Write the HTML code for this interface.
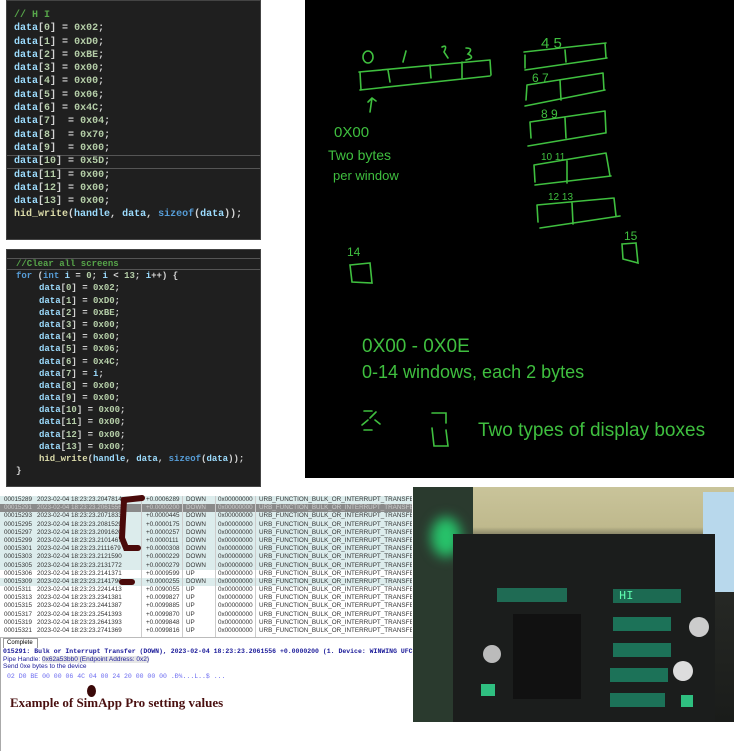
<!DOCTYPE html>
<html><head><meta charset="utf-8"><style>
body{margin:0;width:734px;height:750px;background:#fff;position:relative;overflow:hidden;font-family:"Liberation Sans",sans-serif}
.code{position:absolute;background:#1f1f1f;border:1px solid #444;font-family:"Liberation Mono",monospace;font-weight:bold;font-size:10px;color:#9cdcfe}
.code div{height:13.3px;line-height:13.3px;white-space:pre}
.code.c2 div{height:12.2px;line-height:12.2px}
.n{color:#b5cea8}.c{color:#57a64a}.k{color:#569cd6}.f{color:#dcdcaa}.p{color:#d4d4d4}
.tbl{position:absolute;left:0;top:0;width:412px;font-size:6.3px;color:#333;font-family:"Liberation Sans",sans-serif}
.tbl div{height:8.2px;line-height:8.2px;white-space:nowrap;position:relative}
.tbl span{position:absolute}
.d{background:#dcecec}.s{background:#8a8a8a;color:#ccc}
</style></head><body>
<div class="code" style="left:6px;top:0;width:253px;height:230px;padding-top:8px">
<div style="padding-left:7px"><span class="c">// H I</span></div>
<div style="padding-left:7px">data<span class="p">[</span><span class="n">0</span><span class="p">] = </span><span class="n">0x02</span><span class="p">;</span></div>
<div style="padding-left:7px">data<span class="p">[</span><span class="n">1</span><span class="p">] = </span><span class="n">0xD0</span><span class="p">;</span></div>
<div style="padding-left:7px">data<span class="p">[</span><span class="n">2</span><span class="p">] = </span><span class="n">0xBE</span><span class="p">;</span></div>
<div style="padding-left:7px">data<span class="p">[</span><span class="n">3</span><span class="p">] = </span><span class="n">0x00</span><span class="p">;</span></div>
<div style="padding-left:7px">data<span class="p">[</span><span class="n">4</span><span class="p">] = </span><span class="n">0x00</span><span class="p">;</span></div>
<div style="padding-left:7px">data<span class="p">[</span><span class="n">5</span><span class="p">] = </span><span class="n">0x06</span><span class="p">;</span></div>
<div style="padding-left:7px">data<span class="p">[</span><span class="n">6</span><span class="p">] = </span><span class="n">0x4C</span><span class="p">;</span></div>
<div style="padding-left:7px">data<span class="p">[</span><span class="n">7</span><span class="p">]  = </span><span class="n">0x04</span><span class="p">;</span></div>
<div style="padding-left:7px">data<span class="p">[</span><span class="n">8</span><span class="p">]  = </span><span class="n">0x70</span><span class="p">;</span></div>
<div style="padding-left:7px">data<span class="p">[</span><span class="n">9</span><span class="p">]  = </span><span class="n">0x00</span><span class="p">;</span></div>
<div style="padding-left:7px;border-top:1px solid #555;border-bottom:1px solid #555;height:11.3px;line-height:11.3px">data<span class="p">[</span><span class="n">10</span><span class="p">] = </span><span class="n">0x5D</span><span class="p">;</span></div>
<div style="padding-left:7px">data<span class="p">[</span><span class="n">11</span><span class="p">] = </span><span class="n">0x00</span><span class="p">;</span></div>
<div style="padding-left:7px">data<span class="p">[</span><span class="n">12</span><span class="p">] = </span><span class="n">0x00</span><span class="p">;</span></div>
<div style="padding-left:7px">data<span class="p">[</span><span class="n">13</span><span class="p">] = </span><span class="n">0x00</span><span class="p">;</span></div>
<div style="padding-left:7px"><span class="f">hid_write</span><span class="p">(</span>handle<span class="p">, </span>data<span class="p">, </span><span class="k">sizeof</span><span class="p">(</span>data<span class="p">));</span></div>
</div>
<div class="code c2" style="left:6px;top:249px;width:253px;height:228px;padding-top:8px;font-size:9px">
<div style="padding-left:9px;border-top:1px solid #555;border-bottom:1px solid #555;height:10.2px;line-height:10.2px"><span class="c">//Clear all screens</span></div>
<div style="padding-left:9px"><span class="k">for</span><span class="p"> (</span><span class="k">int</span> i<span class="p"> = </span><span class="n">0</span><span class="p">; </span>i<span class="p"> &lt; </span><span class="n">13</span><span class="p">; </span>i<span class="p">++) {</span></div>
<div style="padding-left:32px">data<span class="p">[</span><span class="n">0</span><span class="p">] = </span><span class="n">0x02</span><span class="p">;</span></div>
<div style="padding-left:32px">data<span class="p">[</span><span class="n">1</span><span class="p">] = </span><span class="n">0xD0</span><span class="p">;</span></div>
<div style="padding-left:32px">data<span class="p">[</span><span class="n">2</span><span class="p">] = </span><span class="n">0xBE</span><span class="p">;</span></div>
<div style="padding-left:32px">data<span class="p">[</span><span class="n">3</span><span class="p">] = </span><span class="n">0x00</span><span class="p">;</span></div>
<div style="padding-left:32px">data<span class="p">[</span><span class="n">4</span><span class="p">] = </span><span class="n">0x00</span><span class="p">;</span></div>
<div style="padding-left:32px">data<span class="p">[</span><span class="n">5</span><span class="p">] = </span><span class="n">0x06</span><span class="p">;</span></div>
<div style="padding-left:32px">data<span class="p">[</span><span class="n">6</span><span class="p">] = </span><span class="n">0x4C</span><span class="p">;</span></div>
<div style="padding-left:32px">data<span class="p">[</span><span class="n">7</span><span class="p">] = </span>i<span class="p">;</span></div>
<div style="padding-left:32px">data<span class="p">[</span><span class="n">8</span><span class="p">] = </span><span class="n">0x00</span><span class="p">;</span></div>
<div style="padding-left:32px">data<span class="p">[</span><span class="n">9</span><span class="p">] = </span><span class="n">0x00</span><span class="p">;</span></div>
<div style="padding-left:32px">data<span class="p">[</span><span class="n">10</span><span class="p">] = </span><span class="n">0x00</span><span class="p">;</span></div>
<div style="padding-left:32px">data<span class="p">[</span><span class="n">11</span><span class="p">] = </span><span class="n">0x00</span><span class="p">;</span></div>
<div style="padding-left:32px">data<span class="p">[</span><span class="n">12</span><span class="p">] = </span><span class="n">0x00</span><span class="p">;</span></div>
<div style="padding-left:32px">data<span class="p">[</span><span class="n">13</span><span class="p">] = </span><span class="n">0x00</span><span class="p">;</span></div>
<div style="padding-left:32px"><span class="f">hid_write</span><span class="p">(</span>handle<span class="p">, </span>data<span class="p">, </span><span class="k">sizeof</span><span class="p">(</span>data<span class="p">));</span></div>
<div style="padding-left:9px"><span class="p">}</span></div>
</div>

<svg style="position:absolute;left:305px;top:0" width="429" height="478" viewBox="305 0 429 478">
<rect x="305" y="0" width="429" height="478" fill="#000"/>
<g fill="none" stroke="#3fbf3f" stroke-width="1.6" stroke-linecap="round">
<path d="M359 72 L490 60 M360 90 L490 76 M360 72 L361 90 M388 70 L390 82 M430 65 L431 78 M462 62 L462 78 M490 60 L491 75"/>
<ellipse cx="368" cy="57" rx="5" ry="6"/>
<path d="M403 62 L406 51 M442 47 Q448 44 444 52 L448 58 M466 48 Q474 48 468 54 Q476 58 466 60"/>
<path d="M370 112 L372 98 M368 102 L372 98 L376 101"/>
<path d="M524 52 L606 43 M525 70 L607 58 M525 55 L525 68 M565 50 L566 62 M605 43 L606 58"/>
<path d="M527 85 L603 73 M525 106 L605 90 M527 85 L526 100 M560 80 L561 100 M603 73 L604 90"/>
<path d="M530 122 L605 111 M528 146 L605 133 M530 122 L531 138 M565 118 L566 138 M605 111 L606 133"/>
<path d="M534 165 L606 153 M535 185 L611 176 M534 165 L535 182 M567 161 L567 183 M606 153 L610 176"/>
<path d="M537 205 L614 198 M540 228 L620 216 M537 205 L538 222 M572 203 L573 224 M614 198 L616 216"/>
<path d="M350 265 L370 263 L372 283 L352 282 Z"/>
<path d="M622 244 L636 243 L638 263 L623 259 Z"/>
<path d="M364 411 L372 411 M364 430 L372 430 M376 412 L370 418 M362 425 L368 420 M380 424 L375 420"/>
<path d="M432 413 L446 413 L446 423 M432 428 L434 446 L448 446 L446 430"/>
</g>
<g fill="#3fbf3f" font-family="Liberation Sans,sans-serif">
<text x="334" y="137" font-size="15">0X00</text>
<text x="328" y="160" font-size="14">Two bytes</text>
<text x="333" y="180" font-size="13">per window</text>
<text x="541" y="48" font-size="15">4  5</text>
<text x="532" y="82" font-size="12">6   7</text>
<text x="541" y="118" font-size="12">8   9</text>
<text x="541" y="160" font-size="10">10    11</text>
<text x="548" y="200" font-size="10">12    13</text>
<text x="347" y="256" font-size="12">14</text>
<text x="624" y="240" font-size="12">15</text>
<text x="362" y="352" font-size="19">0X00 - 0X0E</text>
<text x="362" y="378" font-size="18">0-14 windows, each 2 bytes</text>
<text x="478" y="436" font-size="19">Two types of display boxes</text>
</g>
</svg>

<div style="position:absolute;left:0;top:496px;width:412px;height:142px;background:#fff;overflow:hidden">
<div class="tbl">
<div class="d"><span style="left:4px">00015289</span><span style="left:37px">2023-02-04 18:23:23.2047814</span><span style="left:146px">+0.0006289</span><span style="left:186px">DOWN</span><span style="left:218px">0x00000000</span><span style="left:259px">URB_FUNCTION_BULK_OR_INTERRUPT_TRANSFER</span></div>
<div class="s"><span style="left:4px">00015291</span><span style="left:37px">2023-02-04 18:23:23.2061556</span><span style="left:146px">+0.0000200</span><span style="left:186px">DOWN</span><span style="left:218px">0x00000000</span><span style="left:259px">URB_FUNCTION_BULK_OR_INTERRUPT_TRANSFER</span></div>
<div class="d"><span style="left:4px">00015293</span><span style="left:37px">2023-02-04 18:23:23.2071833</span><span style="left:146px">+0.0000445</span><span style="left:186px">DOWN</span><span style="left:218px">0x00000000</span><span style="left:259px">URB_FUNCTION_BULK_OR_INTERRUPT_TRANSFER</span></div>
<div class="d"><span style="left:4px">00015295</span><span style="left:37px">2023-02-04 18:23:23.2081529</span><span style="left:146px">+0.0000175</span><span style="left:186px">DOWN</span><span style="left:218px">0x00000000</span><span style="left:259px">URB_FUNCTION_BULK_OR_INTERRUPT_TRANSFER</span></div>
<div class="d"><span style="left:4px">00015297</span><span style="left:37px">2023-02-04 18:23:23.2091620</span><span style="left:146px">+0.0000257</span><span style="left:186px">DOWN</span><span style="left:218px">0x00000000</span><span style="left:259px">URB_FUNCTION_BULK_OR_INTERRUPT_TRANSFER</span></div>
<div class="d"><span style="left:4px">00015299</span><span style="left:37px">2023-02-04 18:23:23.2101467</span><span style="left:146px">+0.0000111</span><span style="left:186px">DOWN</span><span style="left:218px">0x00000000</span><span style="left:259px">URB_FUNCTION_BULK_OR_INTERRUPT_TRANSFER</span></div>
<div class="d"><span style="left:4px">00015301</span><span style="left:37px">2023-02-04 18:23:23.2111679</span><span style="left:146px">+0.0000308</span><span style="left:186px">DOWN</span><span style="left:218px">0x00000000</span><span style="left:259px">URB_FUNCTION_BULK_OR_INTERRUPT_TRANSFER</span></div>
<div class="d"><span style="left:4px">00015303</span><span style="left:37px">2023-02-04 18:23:23.2121590</span><span style="left:146px">+0.0000229</span><span style="left:186px">DOWN</span><span style="left:218px">0x00000000</span><span style="left:259px">URB_FUNCTION_BULK_OR_INTERRUPT_TRANSFER</span></div>
<div class="d"><span style="left:4px">00015305</span><span style="left:37px">2023-02-04 18:23:23.2131772</span><span style="left:146px">+0.0000279</span><span style="left:186px">DOWN</span><span style="left:218px">0x00000000</span><span style="left:259px">URB_FUNCTION_BULK_OR_INTERRUPT_TRANSFER</span></div>
<div><span style="left:4px">00015306</span><span style="left:37px">2023-02-04 18:23:23.2141371</span><span style="left:146px">+0.0009599</span><span style="left:186px">UP</span><span style="left:218px">0x00000000</span><span style="left:259px">URB_FUNCTION_BULK_OR_INTERRUPT_TRANSFER</span></div>
<div class="d"><span style="left:4px">00015309</span><span style="left:37px">2023-02-04 18:23:23.2141790</span><span style="left:146px">+0.0000255</span><span style="left:186px">DOWN</span><span style="left:218px">0x00000000</span><span style="left:259px">URB_FUNCTION_BULK_OR_INTERRUPT_TRANSFER</span></div>
<div><span style="left:4px">00015311</span><span style="left:37px">2023-02-04 18:23:23.2241413</span><span style="left:146px">+0.0090055</span><span style="left:186px">UP</span><span style="left:218px">0x00000000</span><span style="left:259px">URB_FUNCTION_BULK_OR_INTERRUPT_TRANSFER</span></div>
<div><span style="left:4px">00015313</span><span style="left:37px">2023-02-04 18:23:23.2341381</span><span style="left:146px">+0.0099827</span><span style="left:186px">UP</span><span style="left:218px">0x00000000</span><span style="left:259px">URB_FUNCTION_BULK_OR_INTERRUPT_TRANSFER</span></div>
<div><span style="left:4px">00015315</span><span style="left:37px">2023-02-04 18:23:23.2441387</span><span style="left:146px">+0.0099885</span><span style="left:186px">UP</span><span style="left:218px">0x00000000</span><span style="left:259px">URB_FUNCTION_BULK_OR_INTERRUPT_TRANSFER</span></div>
<div><span style="left:4px">00015317</span><span style="left:37px">2023-02-04 18:23:23.2541393</span><span style="left:146px">+0.0099870</span><span style="left:186px">UP</span><span style="left:218px">0x00000000</span><span style="left:259px">URB_FUNCTION_BULK_OR_INTERRUPT_TRANSFER</span></div>
<div><span style="left:4px">00015319</span><span style="left:37px">2023-02-04 18:23:23.2641393</span><span style="left:146px">+0.0099848</span><span style="left:186px">UP</span><span style="left:218px">0x00000000</span><span style="left:259px">URB_FUNCTION_BULK_OR_INTERRUPT_TRANSFER</span></div>
<div><span style="left:4px">00015321</span><span style="left:37px">2023-02-04 18:23:23.2741369</span><span style="left:146px">+0.0099816</span><span style="left:186px">UP</span><span style="left:218px">0x00000000</span><span style="left:259px">URB_FUNCTION_BULK_OR_INTERRUPT_TRANSFER</span></div>
</div>
<div style="position:absolute;left:141px;top:0;width:1px;height:142px;background:#ccc"></div>
<div style="position:absolute;left:182px;top:0;width:1px;height:142px;background:#ccc"></div>
<div style="position:absolute;left:215px;top:0;width:1px;height:142px;background:#ccc"></div>
<div style="position:absolute;left:255px;top:0;width:1px;height:142px;background:#ccc"></div>
</div>
<svg style="position:absolute;left:0;top:486px" width="412" height="120">
<path d="M142 12 L124 14 L122 52 L126 62 L138 62" fill="none" stroke="#4a0a0a" stroke-width="6" stroke-linecap="round"/>
<path d="M122 96 L132 96" stroke="#4a0a0a" stroke-width="6" stroke-linecap="round"/>
</svg>
<div style="position:absolute;left:0;top:637px;width:412px;height:113px;background:#fff;border-left:1px solid #aaa;border-top:1px solid #bbb"></div>
<div style="position:absolute;left:3px;top:638px;width:30px;height:9px;border:1px solid #999;border-bottom:none;font-size:6px;line-height:9px;padding-left:3px;background:#fff">Complete</div>
<div style="position:absolute;left:3px;top:648px;font-family:'Liberation Mono',monospace;font-size:6.5px;color:#1a1a99;white-space:nowrap;line-height:7.5px">
<div style="font-weight:bold">015291: Bulk or Interrupt Transfer (DOWN), 2023-02-04 18:23:23.2061556 +0.0000200 (1. Device: WINWING UFC1 +</div>
<div style="font-family:'Liberation Sans',sans-serif">Pipe Handle: <span style="background:#e6e6e6">0x62a53bb0 (Endpoint Address: 0x2)</span></div>
<div style="font-family:'Liberation Sans',sans-serif">Send 0xe bytes to the device</div>
<div style="color:#6a6af0;padding-left:4px;margin-top:2px">02 D0 BE 00 00 06 4C 04 00 24 20 00 00 00        .Ð¾...L..$ ...</div>
</div>
<div style="position:absolute;left:87px;top:685px;width:9px;height:12px;border-radius:50%;background:#3a0808"></div>
<div style="position:absolute;left:10px;top:695px;font-family:'Liberation Serif',serif;font-weight:bold;font-size:13px;color:#4a1010">Example of SimApp Pro setting values</div>

<div style="position:absolute;left:413px;top:487px;width:321px;height:235px;background:linear-gradient(180deg,#c9c49a 0,#bfb98d 40px,#2a2c28 60px,#1a1c1a 100%);overflow:hidden">
<div style="position:absolute;left:0;top:0;width:60px;height:235px;background:#2a3a2e"></div>
<div style="position:absolute;left:18px;top:30px;width:30px;height:40px;border-radius:50%;background:#27c26a;filter:blur(6px)"></div>
<div style="position:absolute;left:290px;top:5px;width:31px;height:100px;background:#b8d8ec"></div>
<div style="position:absolute;left:40px;top:47px;width:262px;height:190px;background:#1b1d1c"></div>
<div style="position:absolute;left:84px;top:101px;width:70px;height:14px;background:#1f6b54"></div>
<div style="position:absolute;left:200px;top:102px;width:62px;height:14px;background:#1c6a52;color:#5fffb0;font-size:12px;line-height:14px;padding-left:6px;font-family:'Liberation Mono',monospace">HI</div>
<div style="position:absolute;left:200px;top:130px;width:58px;height:14px;background:#1c7258"></div>
<div style="position:absolute;left:200px;top:156px;width:58px;height:14px;background:#1c7258"></div>
<div style="position:absolute;left:197px;top:181px;width:58px;height:14px;background:#1c7258"></div>
<div style="position:absolute;left:197px;top:206px;width:55px;height:14px;background:#1c7258"></div>
<div style="position:absolute;left:100px;top:127px;width:68px;height:85px;background:#111"></div>
<div style="position:absolute;left:276px;top:130px;width:20px;height:20px;border-radius:50%;background:#ccc"></div>
<div style="position:absolute;left:260px;top:174px;width:20px;height:20px;border-radius:50%;background:#ddd"></div>
<div style="position:absolute;left:70px;top:158px;width:18px;height:18px;border-radius:50%;background:#bbb"></div>
<div style="position:absolute;left:68px;top:197px;width:14px;height:12px;background:#2fbf80"></div>
<div style="position:absolute;left:268px;top:208px;width:12px;height:12px;background:#2fbf80"></div>
</div>
</body></html>
